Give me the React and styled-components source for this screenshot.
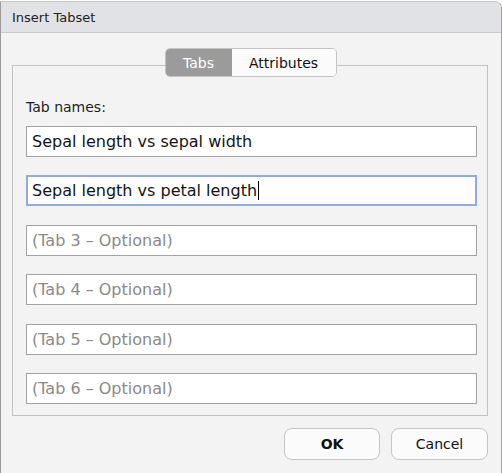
import React from 'react';
import styled, { createGlobalStyle } from 'styled-components';

const GlobalStyle = createGlobalStyle`
    html, body {
        margin: 0;
        padding: 0;
        background: #ffffff;
    }

    body {
        font-family: "DejaVu Sans", "Liberation Sans", sans-serif;
        color: #1e1e1e;
    }
`;

const Window = styled.div`
    box-sizing: border-box;
    width: 502px;
    height: 473px;
    margin-top: 1px;
    display: flex;
    flex-direction: column;
    background: #f2f3f2;
    border-left: 1px solid #9a9a9a;
    border-right: 1px solid #a4a4a4;
    border-top: 1px solid #c4c4c4;
    border-top-right-radius: 7px;
    overflow: hidden;
`;

const TitleBar = styled.div`
    height: 30px;
    display: flex;
    align-items: center;
    padding-left: 11px;
    background: #e1e2e5;
    border-bottom: 1px solid #c9cacc;
    font-size: 13px;
    color: #222;
`;

const Content = styled.div`
    display: flex;
    flex-direction: column;
    padding: 32px 13px 0 11px;
`;

const GroupBox = styled.div`
    display: flex;
    flex-direction: column;
    width: 476px;
    box-sizing: border-box;
    border: 1px solid #c2c2c2;
    padding: 0 10px 11px 13px;
`;

const Switch = styled.div`
    align-self: center;
    display: flex;
    margin-top: -18px;
    margin-left: -2px;
    height: 29px;
    box-sizing: border-box;
    border: 1px solid #c4c4c4;
    border-radius: 5px;
    overflow: hidden;
    background: #fbfbfb;
`;

const SwitchItem = styled.div`
    display: flex;
    align-items: center;
    justify-content: center;
    width: ${p => p.$width}px;
    font-size: 14px;
    background: ${p => (p.$active ? '#9b9b9b' : '#fbfbfb')};
    color: ${p => (p.$active ? '#ffffff' : '#111')};
`;

const Label = styled.div`
    margin-top: 22px;
    margin-bottom: 10px;
    font-size: 14px;
    line-height: 17px;
    color: #1e1e1e;
`;

const Field = styled.div`
    box-sizing: border-box;
    width: 451px;
    height: 31px;
    margin-top: ${p => (p.$first ? 0 : 18.4)}px;
    display: flex;
    align-items: center;
    background: #ffffff;
    border: ${p => (p.$focused ? '2px solid #93ace0' : '1px solid #a3a3a3')};
    padding-left: ${p => (p.$focused ? 4 : 5)}px;
    font-size: 16px;
    white-space: nowrap;
    color: ${p => (p.$placeholder ? '#8a8a8a' : '#141414')};
`;

const Caret = styled.span`
    display: inline-block;
    width: 1px;
    height: 19px;
    background: #000;
    margin-left: 1px;
`;

const Footer = styled.div`
    display: flex;
    justify-content: flex-end;
    gap: 11px;
    margin-top: 12px;
`;

const Button = styled.div`
    box-sizing: border-box;
    width: ${p => p.$width}px;
    height: 32px;
    display: flex;
    align-items: center;
    justify-content: center;
    border: 1px solid #c6c6c6;
    border-radius: 8px;
    background: #fbfbfb;
    font-size: 14px;
    font-weight: ${p => (p.$bold ? 700 : 400)};
    color: #111;
`;

const fields = [
    { text: 'Sepal length vs sepal width' },
    { text: 'Sepal length vs petal length', focused: true },
    { text: '(Tab 3 – Optional)', placeholder: true },
    { text: '(Tab 4 – Optional)', placeholder: true },
    { text: '(Tab 5 – Optional)', placeholder: true },
    { text: '(Tab 6 – Optional)', placeholder: true },
];

export default function App() {
    return (
        <>
            <GlobalStyle />
            <Window>
                <TitleBar>Insert Tabset</TitleBar>
                <Content>
                    <GroupBox>
                        <Switch>
                            <SwitchItem $active $width={66}>Tabs</SwitchItem>
                            <SwitchItem $width={104}>Attributes</SwitchItem>
                        </Switch>
                        <Label>Tab names:</Label>
                        {fields.map((f, i) => (
                            <Field
                                key={i}
                                $first={i === 0}
                                $focused={f.focused}
                                $placeholder={f.placeholder}
                            >
                                {f.text}
                                {f.focused && <Caret />}
                            </Field>
                        ))}
                    </GroupBox>
                    <Footer>
                        <Button $bold $width={96}>OK</Button>
                        <Button $width={97}>Cancel</Button>
                    </Footer>
                </Content>
            </Window>
        </>
    );
}
